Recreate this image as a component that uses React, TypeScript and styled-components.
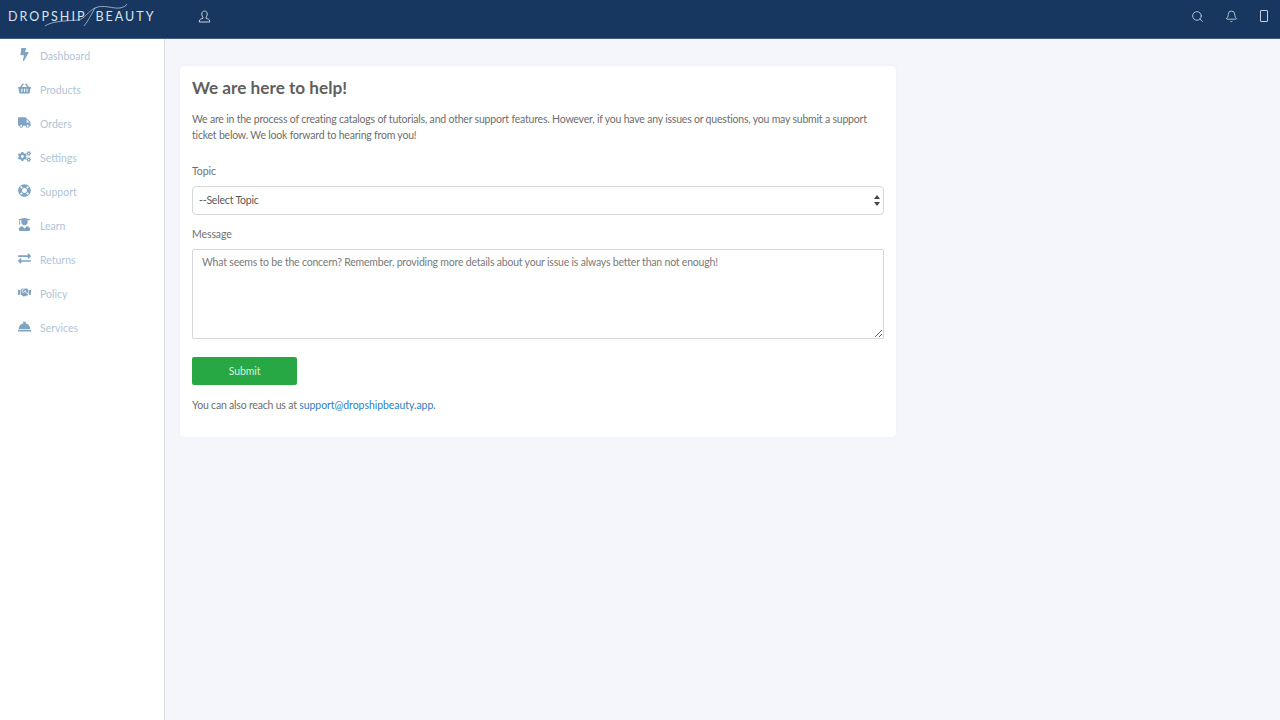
import {type FC} from 'react';
import styled, {createGlobalStyle} from 'styled-components';
import {FaBolt, FaShoppingBasket, FaTruck, FaCogs, FaLifeRing, FaUserGraduate, FaExchangeAlt, FaHandshake, FaConciergeBell} from 'react-icons/fa';
import {Search, Bell} from 'lucide-react';

const GlobalStyle = createGlobalStyle`
    html, body {
        margin: 0;
        padding: 0;
        height: 100%;
        background: #f4f6fb;
        font-family: "Lato", "Noto Sans", sans-serif;
        color: #666;
    }
    * {
        box-sizing: border-box;
    }
`;
const Page = styled.div`
    width: 1280px;
    height: 720px;
    display: flex;
    flex-direction: column;
    overflow: hidden;
`;
const TopBar = styled.header`
    height: 39px;
    flex: none;
    display: flex;
    align-items: center;
    justify-content: space-between;
    padding-bottom: 6px;
    background: #173761;
    border-bottom: 1px solid #3f5d82;
    color: #c5d2e0;
`;
const LeftGroup = styled.div`
    display: flex;
    align-items: center;
`;
const Logo = styled.div`
    position: relative;
    width: 198px;
    padding-left: 8px;
    font-size: 12.5px;
    letter-spacing: 2.05px;
    word-spacing: 4px;
    white-space: nowrap;
    color: #dbe4ed;
`;
const Swoosh = styled.svg`
    position: absolute;
    left: 0;
    top: -8px;
`;
const RightGroup = styled.div`
    display: flex;
    align-items: center;
    gap: 21px;
    padding-right: 12px;
`;
const PhoneIcon = styled.span`
    width: 8px;
    height: 12px;
    margin-left: 1.5px;
    border: 1.5px solid #c5d2e0;
    border-radius: 1px;
`;
const Body = styled.div`
    flex: 1;
    display: flex;
    min-height: 0;
`;
const Sidebar = styled.nav`
    width: 165px;
    flex: none;
    background: #fff;
    border-right: 1px solid #dcdee2;
`;
const NavItem = styled.div`
    height: 34px;
    display: flex;
    align-items: center;
    padding-left: 18px;
    font-size: 10.5px;
    letter-spacing: 0;
    color: #b0c4d6;
`;
const NavIcon = styled.span`
    width: 22px;
    margin-top: -3px;
    display: flex;
    align-items: center;
    color: #7fa3c2;
    font-size: 13px;
`;
const Main = styled.main`
    flex: 1;
    padding: 27px 0 0 15px;
`;
const Card = styled.section`
    width: 716px;
    height: 371px;
    padding: 11px 12px;
    background: #fff;
    border-radius: 4px;
    box-shadow: 0 0 3px rgba(0, 0, 0, 0.04);
`;
const Title = styled.h1`
    margin: 0 0 12px;
    font-size: 17.2px;
    line-height: 22px;
    font-weight: 700;
    color: #5f5f5f;
`;
const Text = styled.p`
    margin: 0;
    font-size: 10.5px;
    line-height: 16px;
    letter-spacing: -0.2px;
    color: #6e6e6e;
`;
const Field = styled.div`
    margin-top: 20px;
    & + & {
        margin-top: 11px;
    }
`;
const Label = styled.label`
    display: block;
    margin-bottom: 7px;
    font-size: 10.5px;
    line-height: 16px;
    letter-spacing: -0.1px;
    color: #707070;
`;
const SelectBox = styled.div`
    height: 29px;
    display: flex;
    align-items: center;
    justify-content: space-between;
    padding: 0 3px 2px 6px;
    border: 1px solid #d5d7da;
    border-radius: 4px;
    font-size: 10.5px;
    letter-spacing: -0.2px;
    color: #5a5a5a;
`;
const SelectArrows = styled.svg`
    margin-top: 2px;
`;
const TextArea = styled.textarea`
    display: block;
    width: 100%;
    height: 90px;
    padding: 4px 9px;
    border: 1px solid #d5d7da;
    border-radius: 2px;
    font-family: inherit;
    font-size: 10.5px;
    line-height: 16px;
    letter-spacing: -0.2px;
    color: #666;
    outline: none;
    &::placeholder {
        color: #7a7a7a;
        opacity: 1;
    }
`;
const SubmitButton = styled.button`
    display: block;
    width: 105px;
    height: 28px;
    margin-top: 18px;
    border: 0;
    border-radius: 2px;
    background: #28a745;
    color: #d9f0df;
    font-family: inherit;
    font-size: 10.5px;
    letter-spacing: -0.1px;
`;
const Footer = styled(Text)`
    margin-top: 12px;
`;
const MailLink = styled.a`
    letter-spacing: -0.05px;
    color: #2f7fc4;
    text-decoration: none;
`;

const navItems = [
    {label: 'Dashboard', icon: <FaBolt/>},
    {label: 'Products', icon: <FaShoppingBasket/>},
    {label: 'Orders', icon: <FaTruck/>},
    {label: 'Settings', icon: <FaCogs/>},
    {label: 'Support', icon: <FaLifeRing/>},
    {label: 'Learn', icon: <FaUserGraduate/>},
    {label: 'Returns', icon: <FaExchangeAlt/>},
    {label: 'Policy', icon: <FaHandshake/>},
    {label: 'Services', icon: <FaConciergeBell/>},
];

const App: FC = () => (
    <>
        <GlobalStyle/>
        <Page>
            <TopBar>
                <LeftGroup>
                    <Logo>
                        DROPSHIP BEAUTY
                        <Swoosh width="160" height="38" viewBox="0 0 160 38" fill="none" stroke="#c9d6e4" strokeWidth="0.7">
                            <path d="M45 25C52 20 65 20 78 19C85 18 88 10 95 7C103 3 113 8 120 7C124 6 126 5 127 3"/>
                            <path d="M84 25C88 20 91 14 95 7"/>
                        </Swoosh>
                    </Logo>
                    <svg width="13" height="13" viewBox="0 0 13 13" fill="none" stroke="currentColor" strokeWidth="1">
                        <path d="M6.5 1C4.8 1 3.8 2.2 3.8 4C3.8 5.6 4.4 6.6 5 7.3V8.2C3.5 8.8 1.3 9.3 1.3 11V12H11.7V11C11.7 9.3 9.5 8.8 8 8.2V7.3C8.6 6.6 9.2 5.6 9.2 4C9.2 2.2 8.2 1 6.5 1Z"/>
                    </svg>
                </LeftGroup>
                <RightGroup>
                    <Search size={13} strokeWidth={1.6}/>
                    <Bell size={13} strokeWidth={1.6}/>
                    <PhoneIcon/>
                </RightGroup>
            </TopBar>
            <Body>
                <Sidebar>
                    {navItems.map(item => (
                        <NavItem key={item.label}>
                            <NavIcon>{item.icon}</NavIcon>
                            {item.label}
                        </NavItem>
                    ))}
                </Sidebar>
                <Main>
                    <Card>
                        <Title>We are here to help!</Title>
                        <Text>
                            We are in the process of creating catalogs of tutorials, and other support features. However, if you have any issues or questions, you may submit a support ticket below. We look forward to hearing from you!
                        </Text>
                        <Field>
                            <Label>Topic</Label>
                            <SelectBox>
                                --Select Topic
                                <SelectArrows width="6" height="11" viewBox="0 0 6 11" fill="#444">
                                    <path d="M3 0L6 4H0ZM3 11L0 7H6Z"/>
                                </SelectArrows>
                            </SelectBox>
                        </Field>
                        <Field>
                            <Label>Message</Label>
                            <TextArea readOnly placeholder="What seems to be the concern? Remember, providing more details about your issue is always better than not enough!"/>
                        </Field>
                        <SubmitButton>Submit</SubmitButton>
                        <Footer>
                            You can also reach us at <MailLink href="#">support@dropshipbeauty.app</MailLink>.
                        </Footer>
                    </Card>
                </Main>
            </Body>
        </Page>
    </>
);

export default App;
